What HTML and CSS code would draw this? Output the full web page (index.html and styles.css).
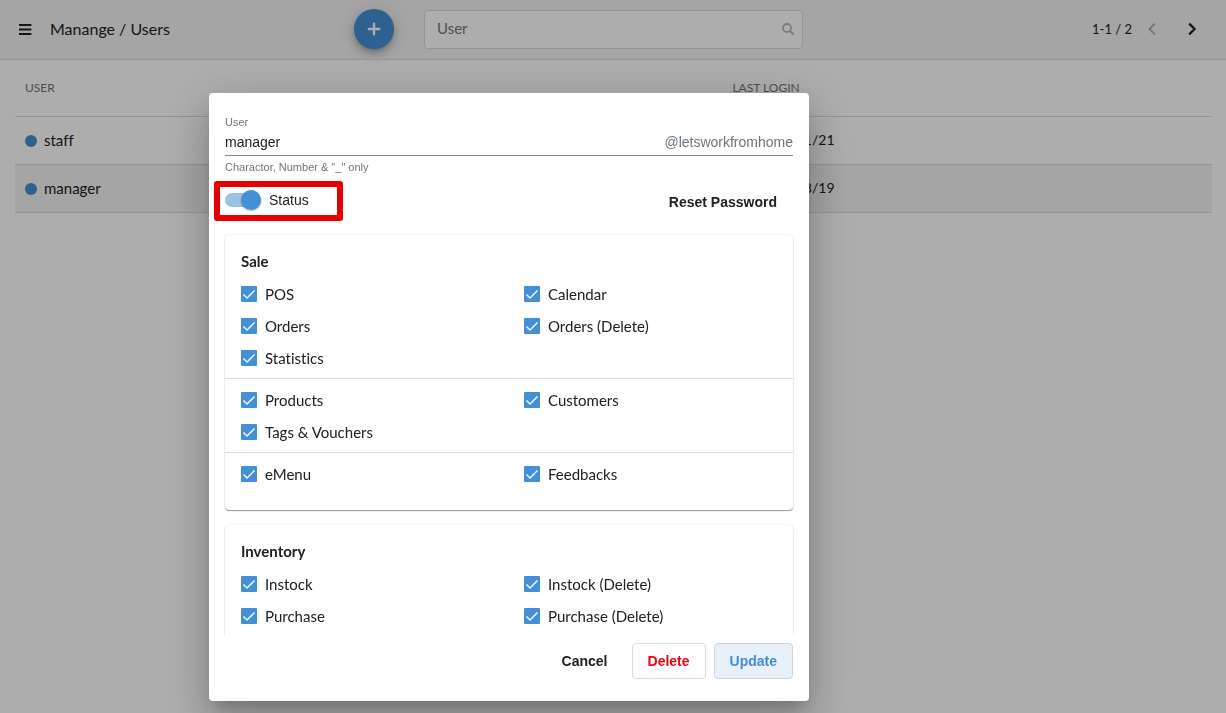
FILE: index.html
```html
<!DOCTYPE html>
<html lang="en">
<head>
<meta charset="utf-8">
<title>Manange / Users</title>
<link rel="stylesheet" href="styles.css">
</head>
<body>
<header class="topbar">
  <div class="brand">
    <button class="icon-btn menu-btn" aria-label="Menu"><svg width="14" height="14" viewBox="0 0 14 14"><path d="M1 3h12.4M1 7.5h12.4M1 12h12.4" stroke="currentColor" stroke-width="2"/></svg></button>
    <h1 class="title">Manange / Users</h1>
  </div>
  <button class="fab" aria-label="Add user"><svg width="14" height="14" viewBox="0 0 14 14"><path d="M7 1.8v10.4M1.8 7h10.4" stroke="currentColor" stroke-width="2.4" stroke-linecap="round"/></svg></button>
  <div class="search">
    <input class="search-input" type="text" placeholder="User" aria-label="User">
    <svg class="search-icon" width="14" height="14" viewBox="0 0 14 14"><circle cx="6" cy="6" r="4" fill="none" stroke="currentColor" stroke-width="1.8"/><path d="M9.2 9.2l2.8 2.8" stroke="currentColor" stroke-width="2.2" stroke-linecap="round"/></svg>
  </div>
  <nav class="pager">
    <span>1-1 / 2</span>
    <button class="icon-btn prev" aria-label="Previous" disabled><svg width="10" height="14" viewBox="0 0 10 14"><path d="M7.8 1.6L2.4 7l5.4 5.4" fill="none" stroke="currentColor" stroke-width="2"/></svg></button>
    <button class="icon-btn" aria-label="Next"><svg width="10" height="14" viewBox="0 0 10 14"><path d="M2.2 1.6L7.6 7l-5.4 5.4" fill="none" stroke="currentColor" stroke-width="2.2"/></svg></button>
  </nav>
</header>
<main class="content">
  <table class="users">
    <colgroup><col class="col-user"><col class="col-login"><col></colgroup>
    <thead><tr><th>USER</th><th>LAST LOGIN</th><th></th></tr></thead>
    <tbody>
      <tr><td><span class="dot"></span>staff</td><td class="date">11/21</td><td></td></tr>
      <tr class="selected"><td><span class="dot"></span>manager</td><td class="date">08/19</td><td></td></tr>
    </tbody>
  </table>
</main>
<div class="backdrop">
  <form class="dialog" role="dialog" aria-label="User">
    <div class="dialog-body">
      <label class="field-label" for="username">User</label>
      <div class="field">
        <input class="field-input" id="username" type="text" value="manager">
        <span class="domain">@letsworkfromhome</span>
      </div>
      <p class="helper">Charactor, Number &amp; "_" only</p>
      <div class="status-row">
        <label class="status"><input class="switch" type="checkbox" checked>Status</label>
        <button class="btn" type="button">Reset Password</button>
      </div>
      <section class="card">
        <h2 class="card-title">Sale</h2>
        <div class="group">
          <label class="perm"><input class="check" type="checkbox" checked>POS</label>
          <label class="perm"><input class="check" type="checkbox" checked>Calendar</label>
          <label class="perm"><input class="check" type="checkbox" checked>Orders</label>
          <label class="perm"><input class="check" type="checkbox" checked>Orders (Delete)</label>
          <label class="perm"><input class="check" type="checkbox" checked>Statistics</label>
        </div>
        <div class="group">
          <label class="perm"><input class="check" type="checkbox" checked>Products</label>
          <label class="perm"><input class="check" type="checkbox" checked>Customers</label>
          <label class="perm"><input class="check" type="checkbox" checked>Tags &amp; Vouchers</label>
        </div>
        <div class="group">
          <label class="perm"><input class="check" type="checkbox" checked>eMenu</label>
          <label class="perm"><input class="check" type="checkbox" checked>Feedbacks</label>
        </div>
      </section>
      <section class="card">
        <h2 class="card-title">Inventory</h2>
        <div class="group">
          <label class="perm"><input class="check" type="checkbox" checked>Instock</label>
          <label class="perm"><input class="check" type="checkbox" checked>Instock (Delete)</label>
          <label class="perm"><input class="check" type="checkbox" checked>Purchase</label>
          <label class="perm"><input class="check" type="checkbox" checked>Purchase (Delete)</label>
        </div>
      </section>
    </div>
    <footer class="actions">
      <button class="btn" type="button">Cancel</button>
      <button class="btn btn-delete" type="button">Delete</button>
      <button class="btn btn-update" type="submit">Update</button>
    </footer>
  </form>
</div>
</body>
</html>
```
FILE: styles.css
```css
* { box-sizing: border-box; }

body {
  margin: 0;
  background: #fff;
  color: #212121;
  font-family: Lato, "Open Sans", sans-serif;
  font-size: 15px;
  line-height: 20px;
  font-variant-ligatures: none;
}

button, input { font: inherit; color: inherit; }
button { padding: 0; border: 0; background: none; cursor: pointer; }

/* Top bar */
.topbar {
  display: flex;
  align-items: center;
  height: 60px;
  padding: 0 24px 1px 18px;
  background: #f3f3f3;
  border-bottom: 1px solid #dcdcdc;
}
.brand { display: flex; align-items: center; gap: 18px; width: 336px; }
.icon-btn { display: flex; }
.title { margin: 0; font-size: 16px; font-weight: 400; }
.fab {
  display: flex;
  align-items: center;
  justify-content: center;
  width: 40px;
  height: 40px;
  margin-right: 30px;
  border-radius: 50%;
  background: #4290d6;
  color: #fff;
  box-shadow: 0 3px 5px -1px rgba(0,0,0,.2), 0 6px 10px rgba(0,0,0,.14), 0 1px 18px rgba(0,0,0,.12);
}
.search { display: flex; position: relative; width: 379px; }
.search-input {
  width: 100%;
  height: 39px;
  padding: 0 36px 2px 12px;
  border: 1px solid #dcdcdc;
  border-radius: 4px;
  background: #fff;
}
.search-input::placeholder { color: #757575; opacity: 1; }
.search-icon { position: absolute; right: 8px; top: 12px; color: #b5b5b5; }
.pager { display: flex; align-items: center; gap: 30px; margin-left: auto; font-size: 13px; padding-right: 5px; }
.prev { color: #b0b0b0; margin-left: -15px; }

/* User table */
.content { padding: 0 14px 0 15px; }
.users { width: 100%; table-layout: fixed; border-collapse: collapse; }
.col-user { width: 59.1%; }
.col-login { width: 10.2%; }
.users th, .users td { padding: 0 10px; border-bottom: 1px solid #dcdcdc; text-align: left; white-space: nowrap; }
.users th { height: 56px; font-size: 12px; font-weight: 400; color: #757575; }
.users td { height: 48px; }
.users .date { text-align: right; font-size: 14px; }
.selected { background: #f3f3f3; }
.dot {
  display: inline-block;
  width: 12px;
  height: 12px;
  margin-right: 7px;
  border-radius: 50%;
  background: #4290d6;
  vertical-align: -1px;
}

/* Dialog */
.backdrop {
  position: fixed;
  inset: 0;
  display: flex;
  justify-content: center;
  align-items: flex-start;
  padding: 93px 208px 12px 0;
  background: rgba(0,0,0,.32);
}
.dialog {
  display: flex;
  flex-direction: column;
  width: 100%;
  max-width: 600px;
  max-height: 100%;
  border-radius: 4px;
  background: #fff;
  box-shadow: 0 11px 15px -7px rgba(0,0,0,.2), 0 24px 38px 3px rgba(0,0,0,.14), 0 9px 46px 8px rgba(0,0,0,.12);
}
.dialog-body {
  flex: 1;
  min-height: 0;
  padding: 22px 16px 0;
  overflow-y: auto;
  scrollbar-width: none;
}
.field-label, .helper {
  display: block;
  margin: 0;
  font: 11px/14px "Liberation Sans", Arial, sans-serif;
  color: #757575;
}
.field {
  display: flex;
  align-items: center;
  height: 27px;
  border-bottom: 1px solid #8c8c8c;
  font: 14px/20px "Liberation Sans", Arial, sans-serif;
}
.field-input { flex: 1; min-width: 0; padding: 0; border: 0; outline: 0; background: none; }
.domain { color: #6c757d; }
.helper { margin-top: 4px; }
.status-row { display: flex; align-items: center; justify-content: space-between; height: 61px; padding-bottom: 6px; }
.status {
  position: relative;
  display: flex;
  align-items: center;
  gap: 8px;
  height: 26px;
  margin-bottom: 4px;
  font: 14px/20px "Liberation Sans", Arial, sans-serif;
}
/* Highlight frame around the status switch */
.status::after {
  content: "";
  position: absolute;
  inset: -6px -34px -8px -11px;
  border: 6px solid #e60000;
  border-radius: 3px;
}
.switch {
  appearance: none;
  position: relative;
  width: 36px;
  height: 14px;
  margin: 0;
  border-radius: 7px;
  background: #9bc3ea;
}
.switch::before {
  content: "";
  position: absolute;
  right: 0;
  top: -3px;
  width: 20px;
  height: 20px;
  border-radius: 50%;
  background: #4290d6;
  box-shadow: 0 1px 2px rgba(0,0,0,.3);
}

/* Permission cards */
.card {
  margin-bottom: 15px;
  padding: 16px 0;
  border-radius: 4px;
  box-shadow: 0 1px 1px rgba(0,0,0,.4), 0 0 2px rgba(0,0,0,.12);
}
.card-title { margin: 0 16px 2px; font-size: 15px; line-height: 20px; font-weight: 700; }
.group { display: grid; grid-template-columns: 1fr 1fr; padding: 5px 2px 4px 0; }
.group + .group { border-top: 1px solid #dcdcdc; }
.perm { display: flex; align-items: center; gap: 8px; height: 32px; padding-left: 16px; }
.check {
  appearance: none;
  width: 16px;
  height: 16px;
  margin: 0;
  border-radius: 1px;
  background: #4290d6;
}
.check::before {
  content: "";
  display: block;
  width: 16px;
  height: 16px;
  background: #fff;
  clip-path: polygon(2px 9px, 3px 8px, 6px 11px, 13px 4px, 14px 5px, 6px 13px);
}

/* Buttons */
.btn {
  height: 36px;
  padding: 0 15px;
  border: 1px solid transparent;
  border-radius: 4px;
  font: 700 14px/20px "Liberation Sans", Arial, sans-serif;
}
.actions { display: flex; justify-content: flex-end; gap: 8px; padding: 8px 16px 22px; }
.btn-delete { border-color: #dcdcdc; color: #f5000f; }
.btn-update { border-color: #c9d6e4; background: #e8f1fa; color: #4290d6; }
```
